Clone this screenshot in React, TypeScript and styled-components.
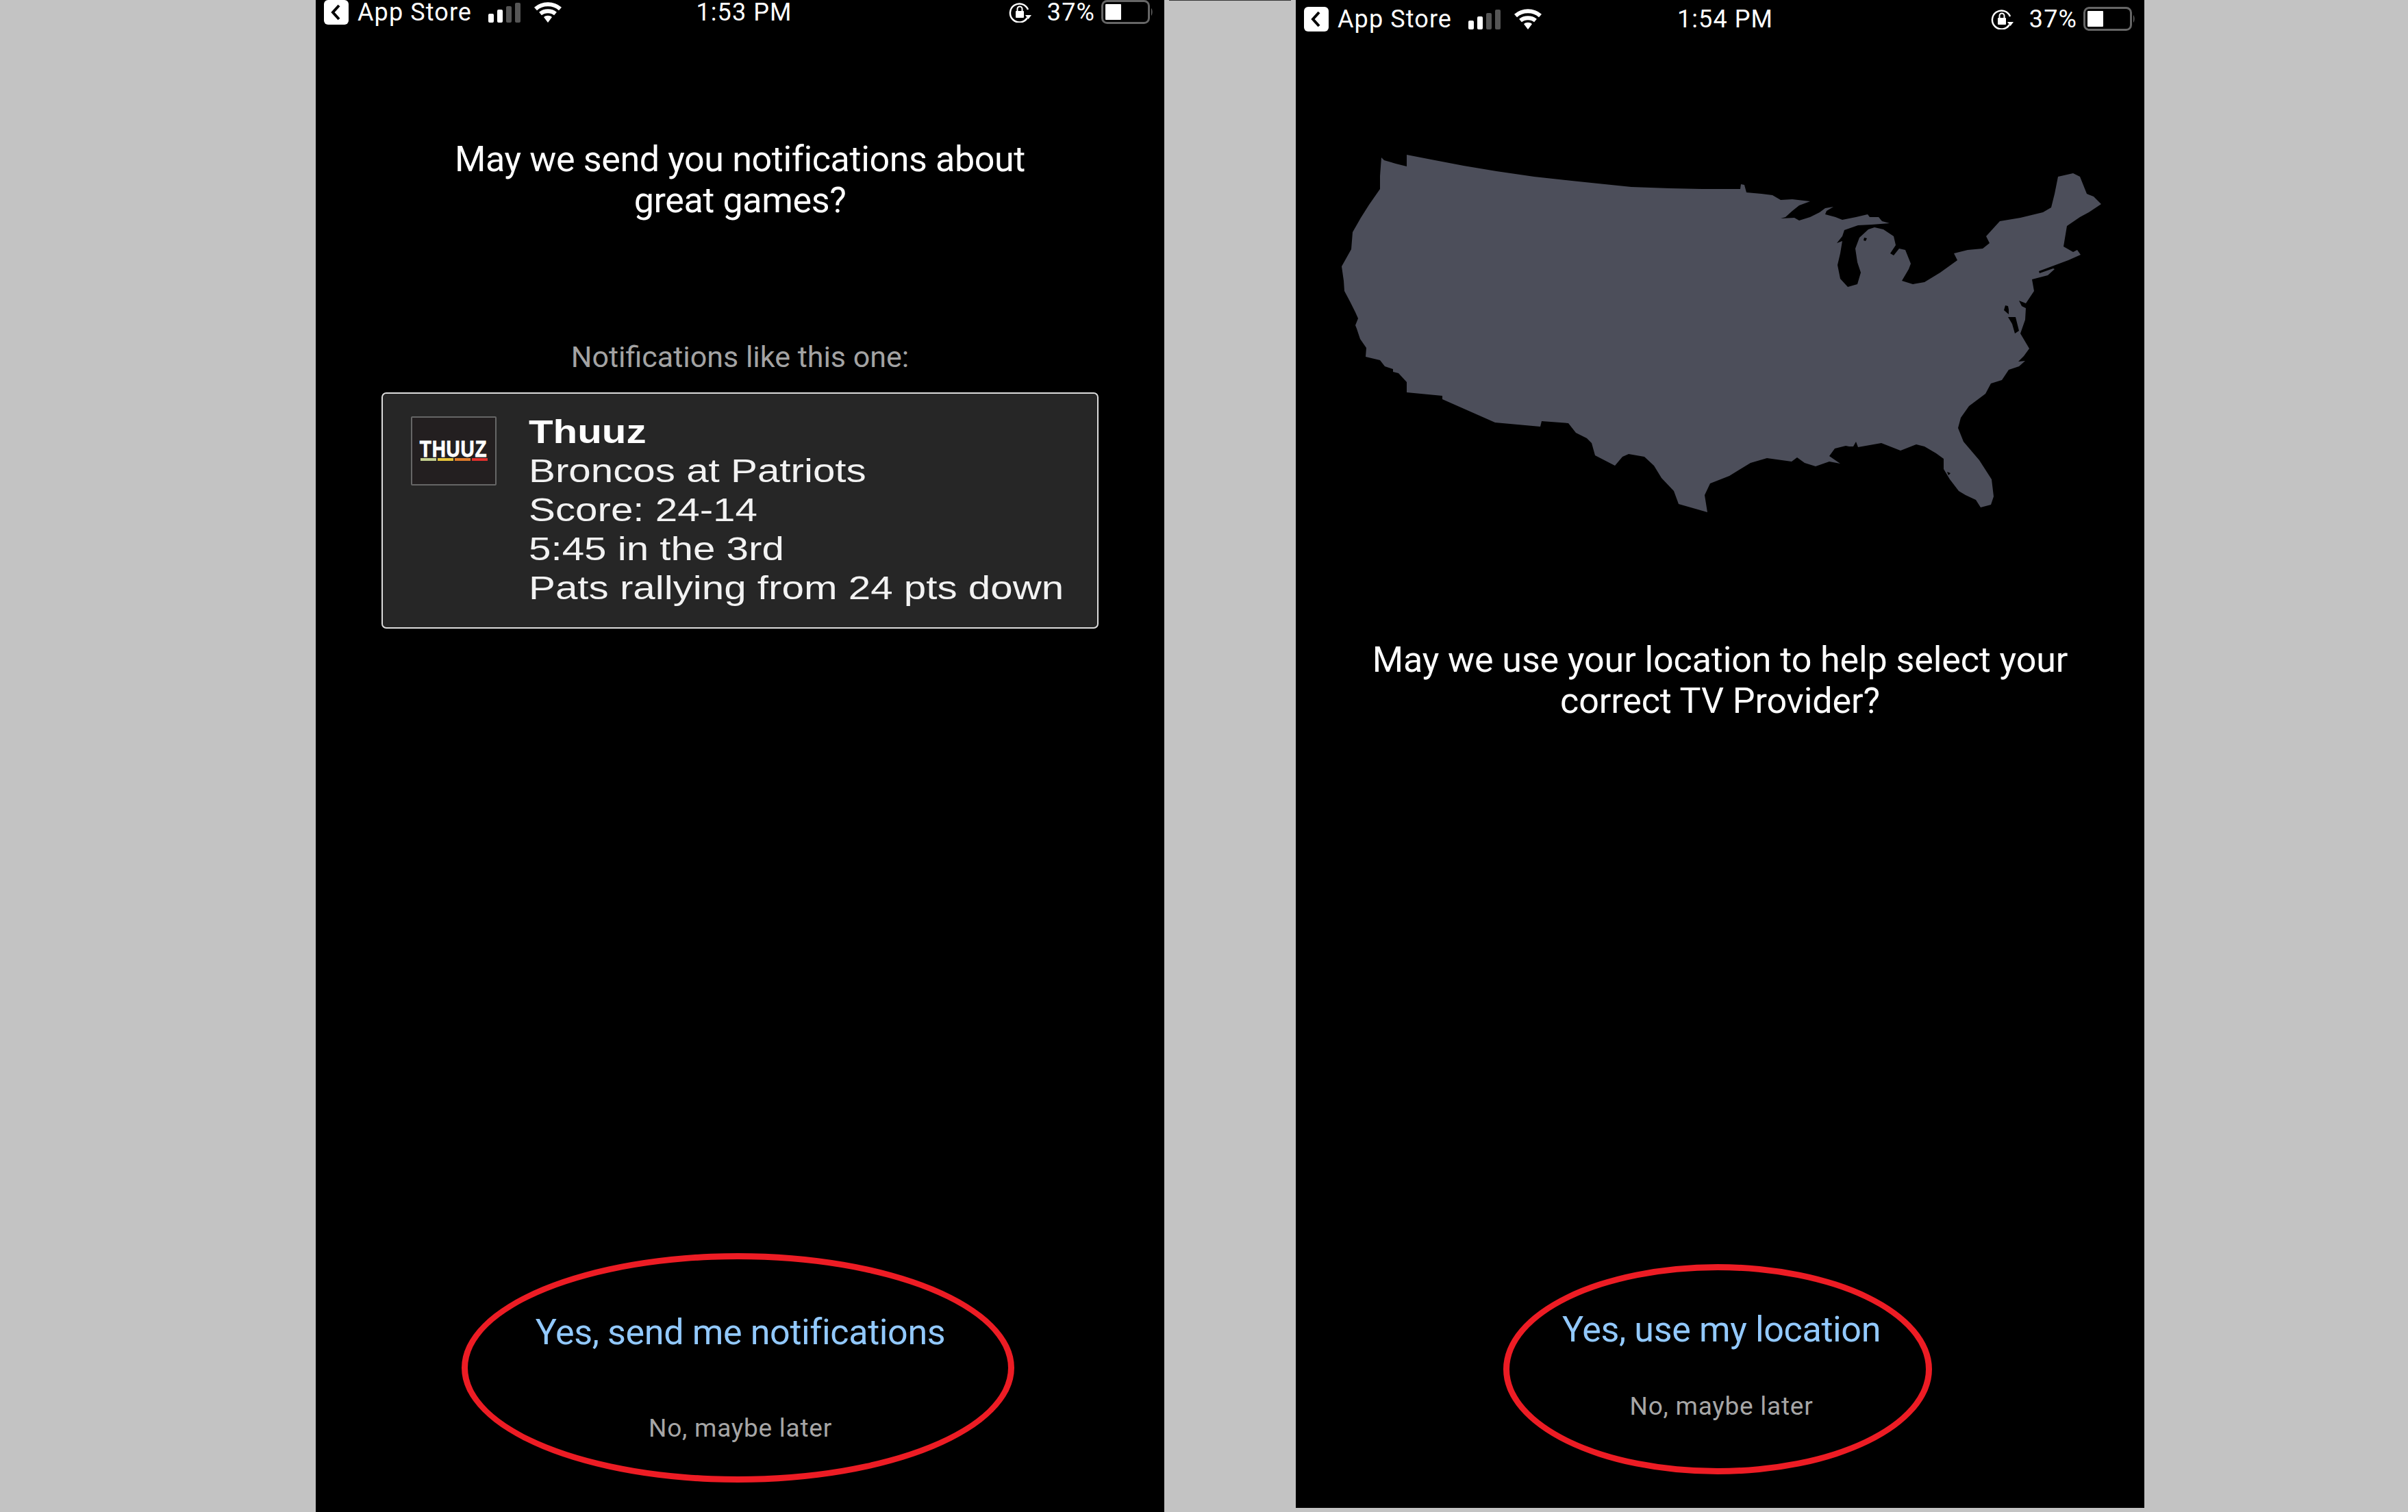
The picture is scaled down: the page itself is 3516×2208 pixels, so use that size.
import React from "react";
import styled, { createGlobalStyle } from "styled-components";

const Global = createGlobalStyle`
  html, body {
    margin: 0;
    background: #c3c3c3;
  }
`;

const Page = styled.div`
  display: flex;
  width: 3516px;
  height: 2208px;
  padding-left: 461px;
  box-sizing: border-box;
  overflow: hidden;
  background: #c3c3c3;
  font-family: Roboto, "Liberation Sans", sans-serif;
`;

const Phone = styled.div<{ $height: number }>`
  display: flex;
  flex-direction: column;
  flex: none;
  width: 1239px;
  height: ${({ $height }) => $height}px;
  overflow: hidden;
  background: #000;
  color: #fff;
`;

const Gutter = styled.div`
  flex: none;
  width: 192px;
  padding: 0 7px;
  box-sizing: border-box;
`;

const TopRule = styled.div`
  height: 1px;
  background: #333;
`;

const StatusBar = styled.div<{ $top: number; $right: number }>`
  display: grid;
  flex: none;
  grid-template-columns: 1fr auto 1fr;
  align-items: center;
  height: 46px;
  margin-top: ${({ $top }) => $top}px;
  padding: 0 ${({ $right }) => $right}px 0 12px;
  font-size: 36px;
  line-height: 36px;
  letter-spacing: 1.1px;
`;

const StatusGroup = styled.div<{ $end?: boolean }>`
  display: flex;
  align-items: center;
  justify-content: ${({ $end }) => ($end ? "flex-end" : "flex-start")};
`;

const BackTile = styled.svg`
  width: 36px;
  height: 36px;
  margin-right: 13px;
`;

const StatusText = styled.span<{ $gap?: number }>`
  margin-right: ${({ $gap }) => $gap ?? 0}px;
  white-space: nowrap;
`;

const ClockText = styled.span`
  margin-left: 16px;
  white-space: nowrap;
`;

const SignalIcon = styled.svg`
  width: 48px;
  height: 30px;
  margin-right: 18px;
`;

const WifiIcon = styled.svg`
  width: 42px;
  height: 30px;
`;

const LockIcon = styled.svg`
  width: 34px;
  height: 30px;
  margin-right: 22px;
`;

const BatteryIcon = styled.svg`
  width: 76px;
  height: 36px;
  margin-left: 9px;
`;

const Prompt = styled.h1<{ $top: number; $tracking: number }>`
  margin: ${({ $top }) => $top}px 0 0;
  font-size: 52px;
  font-weight: 400;
  line-height: 60px;
  letter-spacing: ${({ $tracking }) => $tracking}px;
  text-align: center;
`;

const Caption = styled.p`
  margin: 173px 0 0;
  color: #a3a3a3;
  font-size: 43px;
  line-height: 50px;
  text-align: center;
`;

const SampleCard = styled.div`
  display: flex;
  gap: 47px;
  width: 1047px;
  height: 345px;
  margin: 27px 0 0 96px;
  padding: 27px 41px;
  box-sizing: border-box;
  border: 2px solid #ddd;
  border-radius: 7px;
  background: #262626;
`;

const AppIcon = styled.div`
  display: flex;
  flex: none;
  flex-direction: column;
  align-items: center;
  width: 125px;
  height: 101px;
  margin-top: 6px;
  padding-top: 32px;
  box-sizing: border-box;
  border: 2px solid #666;
  border-radius: 2px;
  background: #231f20;
`;

const LogoWord = styled.span`
  color: #fff;
  font-family: "Liberation Sans", sans-serif;
  font-size: 34px;
  font-weight: 700;
  line-height: 26px;
  letter-spacing: 1px;
  -webkit-text-stroke: 0.8px #fff;
  transform: scaleX(0.82);
`;

const LogoBars = styled.div`
  display: flex;
  gap: 2px;
  width: 98px;
  height: 4px;
  margin-top: 1px;
`;

const LogoBar = styled.span<{ $color: string }>`
  flex: 1;
  background: ${({ $color }) => $color};
`;

const CardLines = styled.div`
  flex: none;
  color: #f2f2f2;
  font-family: "Liberation Sans", sans-serif;
  font-size: 48px;
  line-height: 57px;
  white-space: nowrap;
  transform: scaleX(1.215);
  transform-origin: left top;
`;

const CardTitle = styled.div`
  color: #fff;
  font-weight: 700;
`;

const MapDrawing = styled.svg`
  flex: none;
  width: 1240px;
  height: 600px;
  margin: 129px 0 0 8px;
`;

const Oval = styled.div<{ $left: number; $width: number; $height: number; $bottom: number; $pad: number; $gap: number; $shift: number }>`
  display: flex;
  flex-direction: column;
  align-items: center;
  gap: ${({ $gap }) => $gap}px;
  width: ${({ $width }) => $width}px;
  height: ${({ $height }) => $height}px;
  margin: auto 0 ${({ $bottom }) => $bottom}px ${({ $left }) => $left}px;
  padding: ${({ $pad }) => $pad}px 0 0 ${({ $shift }) => $shift}px;
  box-sizing: border-box;
  border: 9px solid #ed1c24;
  border-radius: 50%;
`;

const YesAction = styled.div`
  color: #92c9ff;
  font-size: 52px;
  line-height: 60px;
  letter-spacing: -0.35px;
  white-space: nowrap;
`;

const NoAction = styled.div`
  color: #a6a6a6;
  font-size: 37px;
  line-height: 44px;
  letter-spacing: 0.75px;
  white-space: nowrap;
`;

const MAP_OUTLINE =
  "M117 50L121 54L138 59L154 63L154 46L190 53L237 62L285 70L340 78L395 84L443 89L482 93L538 95L585 96L641 96L642 89L647 90L650 101L672 103L688 105L700 112L717 111L743 114L727 120L717 128L707 137L700 139L720 138L727 142L743 137L757 130L765 124L777 122L767 128L765 133L780 137L790 141L810 137L827 133L830 137L843 137L848 143L859 146L833 148L813 149L793 156L790 165L782 175L790 172L787 190L783 207L787 227L798 239L812 235L817 218L812 203L809 183L815 167L828 155L837 152L850 155L865 165L868 178L860 190L865 193L873 183L882 185L890 205L887 213L877 230L893 235L910 232L933 218L958 200L953 190L973 185L995 183L1005 175L1000 165L1020 143L1050 138L1083 130L1095 123L1100 103L1105 78L1127 73L1137 78L1147 103L1157 107L1168 118L1150 130L1137 137L1118 150L1113 180L1127 188L1133 185L1138 192L1120 200L1077 216L1078 219L1098 212L1100 213L1090 222L1067 228L1070 245L1058 263L1048 259L1052 267L1058 270L1057 287L1050 307L1063 329L1055 340L1047 348L1057 347L1048 355L1033 360L1023 375L1007 380L999 395L975 413L963 430L959 445L967 465L990 492L1008 520L1011 545L1007 557L992 561L985 550L970 543L960 537L947 520L938 505L938 490L927 482L910 472L898 469L875 478L847 467L813 473L810 465L806 472L800 472L795 471L779 475L771 486L787 497L771 494L751 501L735 496L724 488L716 494L680 489L656 496L625 515L597 526L589 543L593 568L551 556L544 537L526 518L515 500L501 487L478 483L469 487L458 500L429 485L424 467L417 460L401 452L390 438L351 435L349 443L283 437L206 403L206 398L154 393L154 378L142 365L134 363L134 359L122 355L115 346L94 341L95 328L86 315L81 300L79 295L83 285L79 276L71 260L63 245L62 230L59 209L73 184L75 159L87 138L99 119L115 96L115 77Z";

// bays and lakes that sit inside the land
const MAP_HOLES =
  "M1028 266L1026 273L1033 279L1033 272L1032 267ZM1032 283L1043 283L1048 303L1042 307L1038 293ZM822 167L826 168L824 172L821 171ZM943 509L948 511L945 514Z";

const Status = ({ top, right, time }: { top: number; right: number; time: string }) => (
  <StatusBar $top={top} $right={right}>
    <StatusGroup>
      <BackTile viewBox="0 0 36 36">
        <rect width="36" height="36" rx="6" fill="#fff" />
        <path d="M22 8L13 18L22 28" fill="none" stroke="#000" strokeWidth="4" />
      </BackTile>
      <StatusText $gap={24}>App Store</StatusText>
      <SignalIcon viewBox="0 0 48 30">
        <rect x="0" y="17" width="8" height="13" rx="2" fill="#fff" />
        <rect x="13" y="11" width="8" height="19" rx="2" fill="#fff" />
        <rect x="26" y="6" width="8" height="24" rx="2" fill="#555" />
        <rect x="39" y="1" width="8" height="29" rx="2" fill="#555" />
      </SignalIcon>
      <WifiIcon viewBox="0 0 42 30">
        <path d="M3 10C13 1 29 1 39 10" fill="none" stroke="#fff" strokeWidth="6" />
        <path d="M10 17C16 12 26 12 32 17" fill="none" stroke="#fff" strokeWidth="6" />
        <path d="M15 22C18 19 24 19 27 22L21 30Z" fill="#fff" />
      </WifiIcon>
    </StatusGroup>
    <ClockText>{time}</ClockText>
    <StatusGroup $end>
      <LockIcon viewBox="0 0 34 30">
        <path d="M27 23A13.500 13.500 0 1 1 28 11" fill="none" stroke="#fff" strokeWidth="2.5" />
        <path d="M24 19L33 19L28.500 25Z" fill="#fff" />
        <rect x="10" y="13" width="12" height="10" rx="1" fill="#fff" />
        <path d="M12.500 13V10A3.500 3.500 0 0 1 19.500 10V13" fill="none" stroke="#fff" strokeWidth="2" />
      </LockIcon>
      <StatusText>37%</StatusText>
      <BatteryIcon viewBox="0 0 76 36">
        <rect x="1.500" y="1.500" width="68" height="32" rx="7" fill="none" stroke="#666" strokeWidth="3" />
        <rect x="6" y="6" width="23" height="23" rx="1" fill="#fff" />
        <path d="M73 12C75 14 75 21 73 23Z" fill="#666" />
      </BatteryIcon>
    </StatusGroup>
  </StatusBar>
);

export default function App() {
  return (
    <Page>
      <Global />
      <Phone $height={2208}>
        <Status top={-5} right={16} time="1:53 PM" />
        <Prompt $top={162} $tracking={-0.37}>
          May we send you notifications about
          <br />
          great games?
        </Prompt>
        <Caption>Notifications like this one:</Caption>
        <SampleCard>
          <AppIcon>
            <LogoWord>THUUZ</LogoWord>
            <LogoBars>
              <LogoBar $color="#c5d08f" />
              <LogoBar $color="#e8c63c" />
              <LogoBar $color="#e07b2c" />
              <LogoBar $color="#e0312d" />
            </LogoBars>
          </AppIcon>
          <CardLines>
            <CardTitle>Thuuz</CardTitle>
            <div>Broncos at Patriots</div>
            <div>Score: 24-14</div>
            <div>5:45 in the 3rd</div>
            <div>Pats rallying from 24 pts down</div>
          </CardLines>
        </SampleCard>
        <Oval $left={213} $width={807} $height={335} $bottom={43} $pad={77} $gap={88} $shift={7}>
          <YesAction>Yes, send me notifications</YesAction>
          <NoAction>No, maybe later</NoAction>
        </Oval>
      </Phone>
      <Gutter>
        <TopRule />
      </Gutter>
      <Phone $height={2202}>
        <Status top={5} right={13} time="1:54 PM" />
        <MapDrawing viewBox="0 0 1240 600">
          <path d={`${MAP_OUTLINE}${MAP_HOLES}`} fill="#4c4e5a" fillRule="evenodd" />
        </MapDrawing>
        <Prompt $top={154} $tracking={-0.1}>
          May we use your location to help select your
          <br />
          correct TV Provider?
        </Prompt>
        <Oval $left={303} $width={626} $height={307} $bottom={49} $pad={57} $gap={60} $shift={11}>
          <YesAction>Yes, use my location</YesAction>
          <NoAction>No, maybe later</NoAction>
        </Oval>
      </Phone>
    </Page>
  );
}
